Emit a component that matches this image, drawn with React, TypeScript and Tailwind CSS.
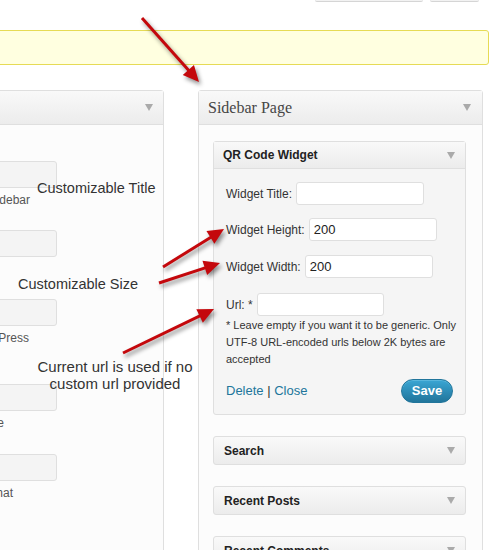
import React from "react";

const Caret = () => (
  <svg width="8" height="7" viewBox="0 0 8 7" className="shrink-0">
    <path d="M0 0h8L4 7z" fill="#aaa" />
  </svg>
);

// tail -> tip arrows for the annotations
const arrows = [
  { x1: 142, y1: 18, x2: 199, y2: 82 },
  { x1: 163, y1: 267, x2: 224, y2: 229 },
  { x1: 159, y1: 283, x2: 220, y2: 263 },
  { x1: 123, y1: 353, x2: 214, y2: 309 },
];

function Arrow({ x1, y1, x2, y2 }: { x1: number; y1: number; x2: number; y2: number }) {
  const dx = x2 - x1;
  const dy = y2 - y1;
  const len = Math.sqrt(dx * dx + dy * dy);
  const ux = dx / len;
  const uy = dy / len;
  const hl = 16;
  const hw = 7.5;
  const bx = x2 - ux * hl;
  const by = y2 - uy * hl;
  const p1 = `${bx - uy * hw},${by + ux * hw}`;
  const p2 = `${bx + uy * hw},${by - ux * hw}`;
  return (
    <g>
      <line x1={x1} y1={y1} x2={bx + ux * 2} y2={by + uy * 2} stroke="#c4080c" strokeWidth="3" />
      <polygon points={`${x2},${y2} ${p1} ${p2}`} fill="#c4080c" />
    </g>
  );
}

const leftRows = [
  { text: "Main Sidebar", mt: "mt-[36px]", pr: "pr-[27px]" },
  { text: "Front Page", mt: "mt-[21px]", pr: "pr-[200px]" },
  { text: "Powered by WordPress", mt: "mt-[21px]", pr: "pr-[28px]" },
  { text: "Footer Widget Space", mt: "mt-[37px]", pr: "pr-[53px]" },
  { text: "Widgets for chat", mt: "mt-[22px]", pr: "pr-[44px]" },
];

function WidgetBar({ title }: { title: string }) {
  return (
    <div className="mt-[21px] flex h-[29px] items-center justify-between rounded-[3px] border border-[#dfdfdf] bg-linear-to-b from-[#f9f9f9] to-[#ececec] pl-[10px] pr-[10px]">
      <span className="text-[12px] font-bold text-[#222]">{title}</span>
      <Caret />
    </div>
  );
}

export default function App() {
  return (
    <div className="relative h-[550px] w-[491px] overflow-hidden bg-white font-['Liberation_Sans',Arial,sans-serif] text-[#333]">
      {/* top buttons, cut off */}
      <div className="flex justify-end gap-[7px] pr-[12px]">
        <div className="h-[2px] w-[108px] rounded-b-[3px] border-b border-[#d5d5d5] bg-[#f2f2f2]" />
        <div className="h-[2px] w-[49px] rounded-b-[3px] border-b border-[#d5d5d5] bg-[#f2f2f2]" />
      </div>

      {/* notice */}
      <div className="ml-[-10px] mr-[2px] mt-[28px] h-[35px] rounded-[3px] border border-[#e6db55] bg-[#ffffe0]" />

      <div className="mt-[25px] flex items-start">
        {/* left sidebar (cut off) */}
        <div className="ml-[-120px] h-[480px] w-[284px] shrink-0 rounded-[3px] border border-[#dfdfdf] bg-[#fcfcfc]">
          <div className="flex h-[34px] items-center justify-end border-b border-[#dfdfdf] bg-linear-to-b from-[#f9f9f9] to-[#ececec] pr-[10px]">
            <Caret />
          </div>
          <div className="w-[176px]">
            {leftRows.map((r) => (
              <div key={r.text} className={r.mt}>
                <div className="h-[27px] w-full rounded-[3px] border border-[#dfdfdf] bg-[#f4f4f4]" />
                <div className={`mt-[3px] whitespace-nowrap text-right text-[12px] leading-[18px] text-[#555] ${r.pr}`}>{r.text}</div>
              </div>
            ))}
          </div>
        </div>

        {/* Sidebar Page */}
        <div className="ml-[34px] h-[480px] w-[285px] shrink-0 rounded-[3px] border border-[#dfdfdf] bg-[#fcfcfc]">
          <div className="flex h-[34px] items-center justify-between border-b border-[#dfdfdf] bg-linear-to-b from-[#f9f9f9] to-[#ececec] pl-[9px] pr-[11px]">
            <span className="font-['Liberation_Serif',Georgia,serif] text-[16px] text-[#464646]">Sidebar Page</span>
            <Caret />
          </div>

          <div className="pl-[14px] pr-[16px] pt-[16px]">
            {/* QR Code Widget */}
            <div className="rounded-[3px] border border-[#dfdfdf] bg-[#f5f5f5]">
              <div className="flex h-[27px] items-center justify-between border-b border-[#dfdfdf] bg-linear-to-b from-[#f9f9f9] to-[#ececec] pl-[9px] pr-[10px]">
                <span className="text-[12px] font-bold text-[#222]">QR Code Widget</span>
                <Caret />
              </div>
              <div className="px-[12px] pb-[11px] pt-[13px] text-[12px]">
                <div className="flex items-center gap-[4px]">
                  <span>Widget Title:</span>
                  <div className="h-[23px] w-[128px] rounded-[3px] border border-[#dfdfdf] bg-white" />
                </div>
                <div className="mt-[13px] flex items-center gap-[4px]">
                  <span>Widget Height:</span>
                  <div className="flex h-[23px] w-[128px] items-center rounded-[3px] border border-[#dfdfdf] bg-white pl-[4px] text-[13px] text-[#222]">200</div>
                </div>
                <div className="mt-[14px] flex items-center gap-[4px]">
                  <span>Widget Width:</span>
                  <div className="flex h-[23px] w-[128px] items-center rounded-[3px] border border-[#dfdfdf] bg-white pl-[4px] text-[13px] text-[#222]">200</div>
                </div>
                <div className="mt-[15px] flex items-center gap-[4px]">
                  <span>Url: *</span>
                  <div className="h-[23px] w-[127px] rounded-[3px] border border-[#dfdfdf] bg-white" />
                </div>
                <p className="mr-[-8px] mt-[1px] text-[11px] leading-[17px] text-[#333]">
                  * Leave empty if you want it to be generic. Only UTF-8 URL-encoded urls below 2K bytes are accepted
                </p>
                <div className="mt-[11px] flex items-center justify-between">
                  <div className="text-[13px] text-[#21759b]">
                    Delete <span className="text-[#333]">|</span> Close
                  </div>
                  <button className="h-[24px] w-[52px] rounded-full border border-[#21759b] bg-linear-to-b from-[#3aa6d4] to-[#21759b] text-[13px] font-bold text-white shadow-[inset_0_1px_0_rgba(120,200,230,0.5)]">
                    Save
                  </button>
                </div>
              </div>
            </div>

            <WidgetBar title="Search" />
            <WidgetBar title="Recent Posts" />
            <WidgetBar title="Recent Comments" />
          </div>
        </div>
      </div>

      {/* annotations */}
      <svg className="pointer-events-none absolute left-0 top-0 h-[550px] w-[491px] drop-shadow-[2px_3px_2px_rgba(0,0,0,0.45)]" viewBox="0 0 491 550">
        {arrows.map((a, i) => (
          <Arrow key={i} {...a} />
        ))}
      </svg>
      <div className="absolute left-[37px] top-[179px] text-[14.5px] leading-[18px] text-[#333]">Customizable Title</div>
      <div className="absolute left-[18px] top-[275px] text-[14.5px] leading-[18px] text-[#333]">Customizable Size</div>
      <div className="absolute left-[29px] top-[358px] w-[172px] text-center text-[15px] leading-[17px] text-[#333]">
        Current url is used if no
        <br />
        custom url provided
      </div>
    </div>
  );
}
